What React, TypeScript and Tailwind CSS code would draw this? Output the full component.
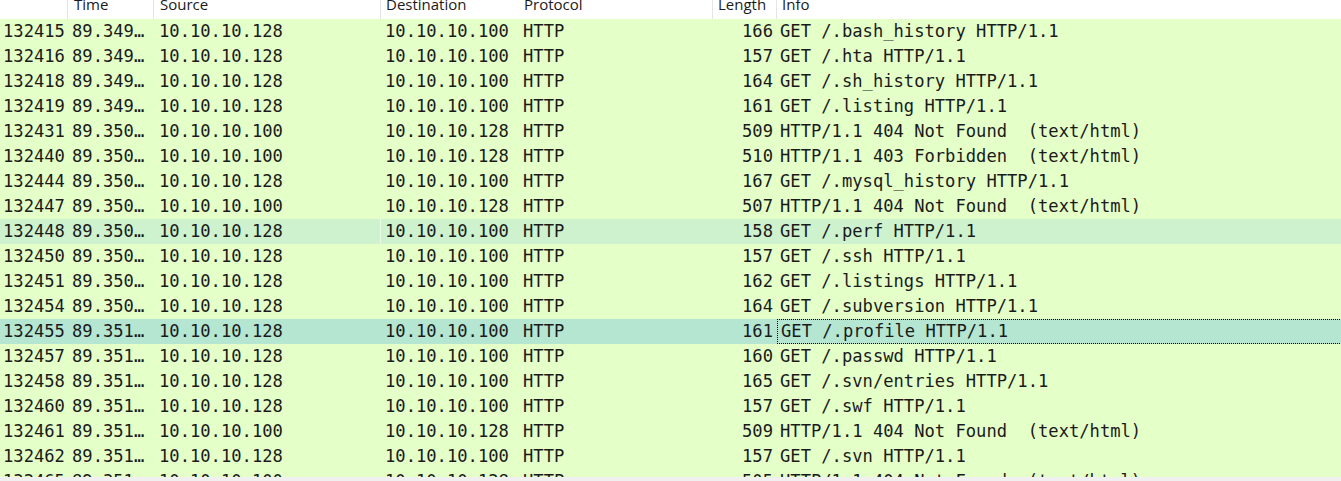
type Packet = {
  no: string;
  time: string;
  src: string;
  dst: string;
  len: string;
  info: string;
  state?: "hover" | "selected";
};

const A = "10.10.10.128";
const B = "10.10.10.100";
const NF = "HTTP/1.1 404 Not Found  (text/html)";

const packets: Packet[] = [
  { no: "132415", time: "89.349…", src: A, dst: B, len: "166", info: "GET /.bash_history HTTP/1.1" },
  { no: "132416", time: "89.349…", src: A, dst: B, len: "157", info: "GET /.hta HTTP/1.1" },
  { no: "132418", time: "89.349…", src: A, dst: B, len: "164", info: "GET /.sh_history HTTP/1.1" },
  { no: "132419", time: "89.349…", src: A, dst: B, len: "161", info: "GET /.listing HTTP/1.1" },
  { no: "132431", time: "89.350…", src: B, dst: A, len: "509", info: NF },
  { no: "132440", time: "89.350…", src: B, dst: A, len: "510", info: "HTTP/1.1 403 Forbidden  (text/html)" },
  { no: "132444", time: "89.350…", src: A, dst: B, len: "167", info: "GET /.mysql_history HTTP/1.1" },
  { no: "132447", time: "89.350…", src: B, dst: A, len: "507", info: NF },
  { no: "132448", time: "89.350…", src: A, dst: B, len: "158", info: "GET /.perf HTTP/1.1", state: "hover" },
  { no: "132450", time: "89.350…", src: A, dst: B, len: "157", info: "GET /.ssh HTTP/1.1" },
  { no: "132451", time: "89.350…", src: A, dst: B, len: "162", info: "GET /.listings HTTP/1.1" },
  { no: "132454", time: "89.350…", src: A, dst: B, len: "164", info: "GET /.subversion HTTP/1.1" },
  { no: "132455", time: "89.351…", src: A, dst: B, len: "161", info: "GET /.profile HTTP/1.1", state: "selected" },
  { no: "132457", time: "89.351…", src: A, dst: B, len: "160", info: "GET /.passwd HTTP/1.1" },
  { no: "132458", time: "89.351…", src: A, dst: B, len: "165", info: "GET /.svn/entries HTTP/1.1" },
  { no: "132460", time: "89.351…", src: A, dst: B, len: "157", info: "GET /.swf HTTP/1.1" },
  { no: "132461", time: "89.351…", src: B, dst: A, len: "509", info: NF },
  { no: "132462", time: "89.351…", src: A, dst: B, len: "157", info: "GET /.svn HTTP/1.1" },
  { no: "132465", time: "89.351…", src: B, dst: A, len: "505", info: NF },
];

const cols = "grid grid-cols-[68px_86px_227px_137px_195px_64px_1fr]";

function HeaderRow() {
  const sep = "border-r border-[#e5e5e5]";
  return (
    <div className="h-[19px] shrink-0 overflow-hidden bg-white">
      <div
        className={`${cols} -mt-[6px] h-[25px] text-[15px] leading-[20px] text-[#1a1a1a]`}
        style={{ fontFamily: '"Open Sans", "Noto Sans", sans-serif' }}
      >
        <div className={sep} />
        <div className={`${sep} pl-[6px]`}>Time</div>
        <div className={`${sep} pl-[6px]`}>Source</div>
        <div className="pl-[5px]">Destination</div>
        <div className={`${sep} pl-[6px]`}>Protocol</div>
        <div className={`${sep} pl-[5px]`}>Length</div>
        <div className="pl-[5px]">Info</div>
      </div>
    </div>
  );
}

function PacketRow({ p }: { p: Packet }) {
  const bg =
    p.state === "selected" ? "bg-[#b4e6d2]" : p.state === "hover" ? "bg-[#cdf2cd]" : "bg-[#e4ffc7]";
  return (
    <div className={`${cols} h-[25px] shrink-0 leading-[25px] whitespace-pre ${bg}`}>
      <div className="pl-[3px]">{p.no}</div>
      <div className="pl-[4px]">{p.time}</div>
      <div className={`pl-[5px] ${p.state === "hover" ? "border-r border-[#e8f8e4]" : ""}`}>{p.src}</div>
      <div className="pl-[4px]">{p.dst}</div>
      <div className="pl-[5px]">HTTP</div>
      <div className="pr-[4px] text-right">{p.len}</div>
      <div
        className={`pl-[3px] ${
          p.state === "selected" ? "border border-dotted border-black leading-[23px] pl-[2px] -mr-px" : ""
        }`}
      >
        {p.info}
      </div>
    </div>
  );
}

export default function App() {
  return (
    <div className="flex h-[481px] w-[1341px] flex-col overflow-hidden bg-white">
      <HeaderRow />
      <div
        className="flex flex-1 flex-col overflow-hidden text-[17.15px] text-[#1a1a1a]"
        style={{ fontFamily: '"DejaVu Sans Mono", "Liberation Mono", monospace' }}
      >
        {packets.map((p) => (
          <PacketRow key={p.no} p={p} />
        ))}
      </div>
      <div className="h-[4px] shrink-0 bg-[#f0f0f0]" />
    </div>
  );
}
